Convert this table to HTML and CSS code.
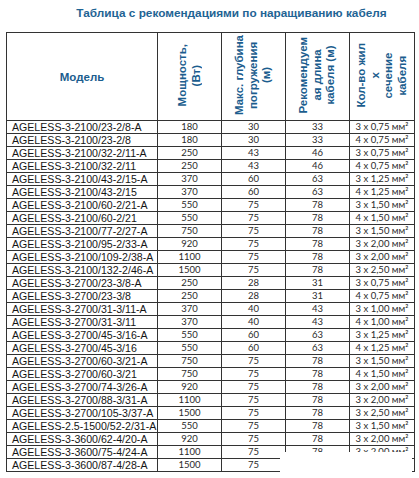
FILE: index.html
```html
<!DOCTYPE html>
<html lang="ru">
<head>
<meta charset="utf-8">
<title>Таблица с рекомендациями по наращиванию кабеля</title>
<link rel="stylesheet" href="styles.css">
</head>
<body>
<div class="page">
  <div class="title">Таблица с рекомендациями по наращиванию кабеля</div>
  <table class="grid">
    <colgroup>
      <col class="c-model">
      <col class="c-num">
      <col class="c-num">
      <col class="c-num">
      <col class="c-cable">
    </colgroup>
    <thead>
      <tr class="head">
        <th class="h-model">Модель</th>
        <th><span class="rot">Мощность,<br>(Вт)</span></th>
        <th><span class="rot">Макс. глубина<br>погружения<br>(м)</span></th>
        <th><span class="rot">Рекомендуем<br>ая длина<br>кабеля (м)</span></th>
        <th><span class="rot">Кол-во жил<br>х<br>сечение<br>кабеля</span></th>
      </tr>
    </thead>
    <tbody>
      <tr><td class="m">AGELESS-3-2100/23-2/8-A</td><td class="n">180</td><td class="n">30</td><td class="n">33</td><td class="n">3 x 0,75 мм²</td></tr>
      <tr><td class="m">AGELESS-3-2100/23-2/8</td><td class="n">180</td><td class="n">30</td><td class="n">33</td><td class="n">4 x 0,75 мм²</td></tr>
      <tr><td class="m">AGELESS-3-2100/32-2/11-A</td><td class="n">250</td><td class="n">43</td><td class="n">46</td><td class="n">3 x 0,75 мм²</td></tr>
      <tr><td class="m">AGELESS-3-2100/32-2/11</td><td class="n">250</td><td class="n">43</td><td class="n">46</td><td class="n">4 x 0,75 мм²</td></tr>
      <tr><td class="m">AGELESS-3-2100/43-2/15-A</td><td class="n">370</td><td class="n">60</td><td class="n">63</td><td class="n">3 x 1,25 мм²</td></tr>
      <tr><td class="m">AGELESS-3-2100/43-2/15</td><td class="n">370</td><td class="n">60</td><td class="n">63</td><td class="n">4 x 1,25 мм²</td></tr>
      <tr><td class="m">AGELESS-3-2100/60-2/21-A</td><td class="n">550</td><td class="n">75</td><td class="n">78</td><td class="n">3 x 1,50 мм²</td></tr>
      <tr><td class="m">AGELESS-3-2100/60-2/21</td><td class="n">550</td><td class="n">75</td><td class="n">78</td><td class="n">4 x 1,50 мм²</td></tr>
      <tr><td class="m">AGELESS-3-2100/77-2/27-A</td><td class="n">750</td><td class="n">75</td><td class="n">78</td><td class="n">3 x 1,50 мм²</td></tr>
      <tr><td class="m">AGELESS-3-2100/95-2/33-A</td><td class="n">920</td><td class="n">75</td><td class="n">78</td><td class="n">3 x 2,00 мм²</td></tr>
      <tr><td class="m">AGELESS-3-2100/109-2/38-A</td><td class="n">1100</td><td class="n">75</td><td class="n">78</td><td class="n">3 x 2,00 мм²</td></tr>
      <tr><td class="m">AGELESS-3-2100/132-2/46-A</td><td class="n">1500</td><td class="n">75</td><td class="n">78</td><td class="n">3 x 2,50 мм²</td></tr>
      <tr><td class="m">AGELESS-3-2700/23-3/8-A</td><td class="n">250</td><td class="n">28</td><td class="n">31</td><td class="n">3 x 0,75 мм²</td></tr>
      <tr><td class="m">AGELESS-3-2700/23-3/8</td><td class="n">250</td><td class="n">28</td><td class="n">31</td><td class="n">4 x 0,75 мм²</td></tr>
      <tr><td class="m">AGELESS-3-2700/31-3/11-A</td><td class="n">370</td><td class="n">40</td><td class="n">43</td><td class="n">3 x 1,00 мм²</td></tr>
      <tr><td class="m">AGELESS-3-2700/31-3/11</td><td class="n">370</td><td class="n">40</td><td class="n">43</td><td class="n">4 x 1,00 мм²</td></tr>
      <tr><td class="m">AGELESS-3-2700/45-3/16-A</td><td class="n">550</td><td class="n">60</td><td class="n">63</td><td class="n">3 x 1,25 мм²</td></tr>
      <tr><td class="m">AGELESS-3-2700/45-3/16</td><td class="n">550</td><td class="n">60</td><td class="n">63</td><td class="n">4 x 1,25 мм²</td></tr>
      <tr><td class="m">AGELESS-3-2700/60-3/21-A</td><td class="n">750</td><td class="n">75</td><td class="n">78</td><td class="n">3 x 1,50 мм²</td></tr>
      <tr><td class="m">AGELESS-3-2700/60-3/21</td><td class="n">750</td><td class="n">75</td><td class="n">78</td><td class="n">4 x 1,50 мм²</td></tr>
      <tr><td class="m">AGELESS-3-2700/74-3/26-A</td><td class="n">920</td><td class="n">75</td><td class="n">78</td><td class="n">3 x 2,00 мм²</td></tr>
      <tr><td class="m">AGELESS-3-2700/88-3/31-A</td><td class="n">1100</td><td class="n">75</td><td class="n">78</td><td class="n">3 x 2,00 мм²</td></tr>
      <tr><td class="m">AGELESS-3-2700/105-3/37-A</td><td class="n">1500</td><td class="n">75</td><td class="n">78</td><td class="n">3 x 2,50 мм²</td></tr>
      <tr><td class="m">AGELESS-2.5-1500/52-2/31-A</td><td class="n">550</td><td class="n">75</td><td class="n">78</td><td class="n">3 x 1,50 мм²</td></tr>
      <tr><td class="m">AGELESS-3-3600/62-4/20-A</td><td class="n">920</td><td class="n">75</td><td class="n">78</td><td class="n">3 x 2,00 мм²</td></tr>
      <tr><td class="m">AGELESS-3-3600/75-4/24-A</td><td class="n">1100</td><td class="n">75</td><td class="n">78</td><td class="n">3 x 2,00 мм²</td></tr>
      <tr><td class="m">AGELESS-3-3600/87-4/28-A</td><td class="n">1500</td><td class="n">75</td><td class="n">78</td><td class="n">3 x 2,50 мм²</td></tr>
    </tbody>
  </table>
  <div class="blank"></div>
</div>
</body>
</html>
```

FILE: styles.css
```css
html, body {
  margin: 0;
  padding: 0;
  background: #ffffff;
}

.page {
  position: relative;
  width: 419px;
  height: 478px;
  overflow: hidden;
}

.title {
  box-sizing: border-box;
  height: 32px;
  padding: 6px 0 0 44px;
  font-family: "Liberation Sans", Arial, sans-serif;
  font-weight: bold;
  font-size: 11.8px;
  line-height: 14px;
  color: #1f6494;
  text-align: center;
  white-space: nowrap;
}

.grid {
  margin-left: 6px;
  width: 409px;
  border-collapse: collapse;
  table-layout: fixed;
}

.c-model { width: 151px; }
.c-num { width: 64px; }
.c-cable { width: 65px; }

.grid th,
.grid td {
  border: 1px solid #333333;
  padding: 0;
}

.head th {
  height: 87px;
  vertical-align: middle;
  text-align: center;
  font-family: "Liberation Sans", Arial, sans-serif;
  font-weight: bold;
  font-size: 11.5px;
  color: #1b5d8e;
}

.rot {
  display: inline-block;
  writing-mode: vertical-rl;
  transform: rotate(180deg);
  text-align: center;
  line-height: 13.5px;
  white-space: nowrap;
}

.grid td {
  height: 12px;
  line-height: 12px;
  white-space: nowrap;
  overflow: hidden;
}

.grid td.m {
  padding-left: 5px;
  font-family: "Liberation Sans", Arial, sans-serif;
  font-size: 10.6px;
  color: #151515;
}

.grid td.n {
  text-align: center;
  font-family: Lato, "Open Sans", sans-serif;
  font-size: 9.5px;
  color: #2a2a2a;
}

.blank {
  position: absolute;
  left: 280px;
  top: 452px;
  width: 132px;
  height: 22px;
  background: #ffffff;
}
```
